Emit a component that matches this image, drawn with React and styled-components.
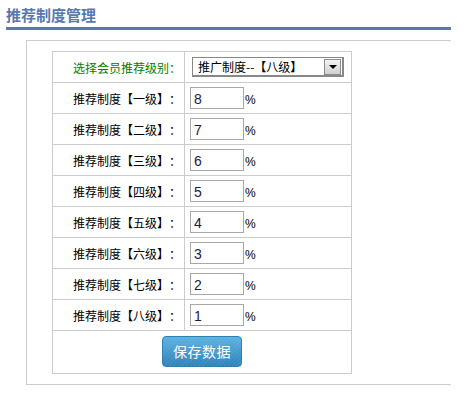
import React from 'react';
import styled, { createGlobalStyle } from 'styled-components';

const GlobalStyle = createGlobalStyle`
  body {
    margin: 0;
    background: #fff;
    font-family: "Noto Sans CJK SC", "Liberation Sans", sans-serif;
    font-size: 12px;
    text-spacing-trim: space-all;
  }
`;

const Page = styled.div`
  width: 445px;
  padding: 6px 0 0 6px;
`;

const Title = styled.h2`
  margin: 0;
  height: 21px;
  line-height: 18px;
  font-size: 15px;
  font-weight: bold;
  color: #5878b0;
  border-bottom: 3px solid #5b79ad;
`;

const Panel = styled.div`
  margin: 10px 0 0 20px;
  padding: 10px 0 10px 25px;
  border: 1px solid #cccccc;
  border-right: none;
`;

const Table = styled.div`
  width: 299px;
  border-top: 1px solid #cccccc;
  border-left: 1px solid #cccccc;
`;

const Row = styled.div`
  display: grid;
  grid-template-columns: 132px 167px;
  height: 31px;
`;

const Cell = styled.div`
  display: flex;
  align-items: center;
  border-right: 1px solid #cccccc;
  border-bottom: 1px solid #cccccc;
`;

const LabelCell = styled(Cell)`
  justify-content: flex-end;
  padding-right: 3px;
  color: ${p => (p.$green ? '#008000' : '#000')};
`;

const ValueCell = styled(Cell)`
  padding-left: ${p => p.$pad || 5}px;
  gap: 1px;
`;

const Input = styled.input`
  box-sizing: border-box;
  width: 54px;
  height: 22px;
  margin: 0;
  padding: 1px 3px 0;
  border: 1px solid #a8a8a8;
  font-family: "Liberation Sans", Arial, sans-serif;
  font-size: 14px;
  color: #1a1a40;
  outline: none;
`;

const Percent = styled.span`
  font-family: "Liberation Sans", Arial, sans-serif;
  font-size: 12px;
  margin-top: 3px;
`;

const SelectBox = styled.div`
  box-sizing: border-box;
  display: flex;
  align-items: center;
  justify-content: space-between;
  width: 152px;
  height: 20px;
  padding: 0 1px 0 5px;
  border: 1px solid #888;
  border-right-width: 2px;
  border-bottom-width: 2px;
  font-size: 12px;
`;

const ArrowButton = styled.span`
  box-sizing: border-box;
  display: flex;
  align-items: center;
  justify-content: center;
  width: 17px;
  height: 16px;
  border: 1px solid #8c8c8c;
  background: linear-gradient(#f4f4f4, #cfcfcf);
`;

const Arrow = styled.span`
  width: 0;
  height: 0;
  border-left: 4px solid transparent;
  border-right: 4px solid transparent;
  border-top: 4px solid #000;
`;

const ButtonRow = styled.div`
  display: flex;
  justify-content: center;
  align-items: center;
  height: 42px;
  border-right: 1px solid #cccccc;
  border-bottom: 1px solid #cccccc;
`;

const SaveButton = styled.button`
  width: 80px;
  height: 31px;
  margin-top: -2px;
  border: 1px solid #2f7fb0;
  border-radius: 4px;
  background: repeating-linear-gradient(135deg, rgba(255,255,255,0.06) 0 1px, transparent 1px 3px),
    linear-gradient(#5cb2e2, #2f84b8);
  color: #fff;
  font-family: "Noto Sans CJK SC", sans-serif;
  font-size: 14px;
  letter-spacing: 0.5px;
  cursor: pointer;
`;

const levels = [
  ['一', 8],
  ['二', 7],
  ['三', 6],
  ['四', 5],
  ['五', 4],
  ['六', 3],
  ['七', 2],
  ['八', 1],
];

const App = () => (
  <Page>
    <GlobalStyle />
    <Title>推荐制度管理</Title>
    <Panel>
      <Table>
        <Row>
          <LabelCell $green>选择会员推荐级别：</LabelCell>
          <ValueCell $pad={7}>
            <SelectBox>
              <span>推广制度--【八级】</span>
              <ArrowButton>
                <Arrow />
              </ArrowButton>
            </SelectBox>
          </ValueCell>
        </Row>
        {levels.map(([name, value]) => (
          <Row key={name}>
            <LabelCell>推荐制度【{name}级】：</LabelCell>
            <ValueCell>
              <Input defaultValue={value} />
              <Percent>%</Percent>
            </ValueCell>
          </Row>
        ))}
        <ButtonRow>
          <SaveButton>保存数据</SaveButton>
        </ButtonRow>
      </Table>
    </Panel>
  </Page>
);

export default App;
